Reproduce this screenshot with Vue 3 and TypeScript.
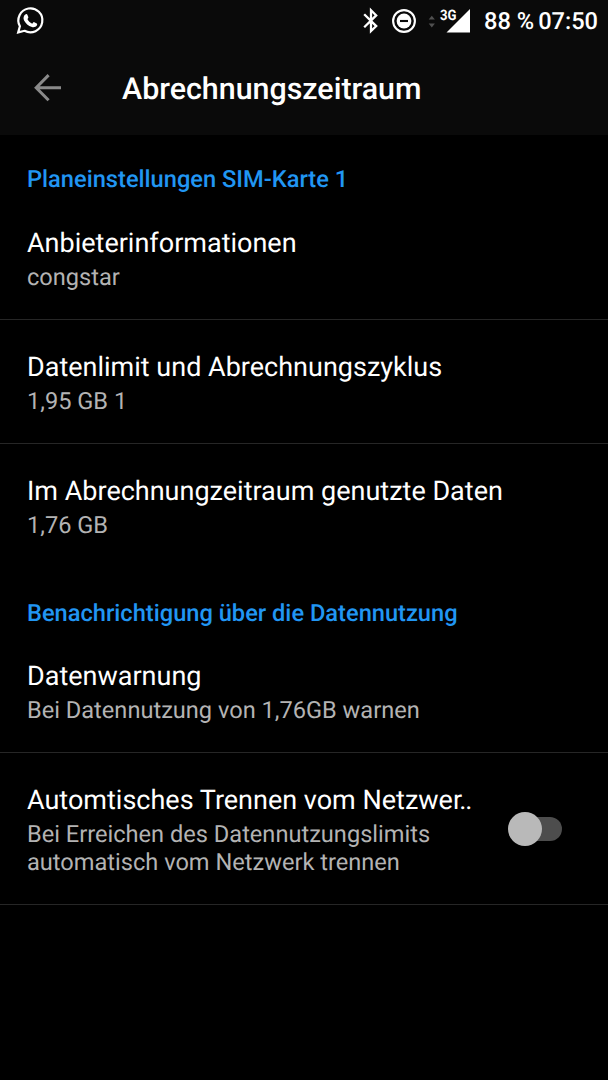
<script setup lang="ts">
import { ref } from 'vue'

interface Row {
  title: string
  cut?: string
  lines: string[]
  divider: boolean
  toggle?: boolean
}
interface Section {
  heading: string
  rows: Row[]
}

const enabled = ref(false)

const sections: Section[] = [
  {
    heading: 'Planeinstellungen SIM-Karte 1',
    rows: [
      { title: 'Anbieterinformationen', lines: ['congstar'], divider: true },
      { title: 'Datenlimit und Abrechnungszyklus', lines: ['1,95 GB 1'], divider: true },
      { title: 'Im Abrechnungzeitraum genutzte Daten', lines: ['1,76 GB'], divider: false },
    ],
  },
  {
    heading: 'Benachrichtigung über die Datennutzung',
    rows: [
      { title: 'Datenwarnung', lines: ['Bei Datennutzung von 1,76GB warnen'], divider: true },
      {
        title: 'Automtisches Trennen vom Netzwe',
        cut: 'r..',
        lines: ['Bei Erreichen des Datennutzungslimits', 'automatisch vom Netzwerk trennen'],
        divider: true,
        toggle: true,
      },
    ],
  },
]
</script>

<template>
  <div class="screen">
    <header class="header">
      <div class="status">
        <svg class="whatsapp" width="30" height="30" viewBox="0 0 30 30">
          <path d="M3.2 26.4 L4.9 20.2 A12 12 0 1 1 9.5 24.8 Z" fill="none" stroke="#fff" stroke-width="2.2" stroke-linejoin="miter" />
          <path d="M10.7 8.2 C11.4 7.8 12.1 8 12.4 8.7 L13.3 11 C13.5 11.6 13.3 12 12.4 13.1 C13.4 15.2 15 16.8 17.2 17.7 C18.3 16.4 18.7 15.9 19.3 16.2 L21.8 17.4 C22.4 17.8 22.2 18.8 21.8 19.6 C21 21.1 18.7 21.7 16.9 21.1 C13.2 20 10.6 17.3 9.1 14.4 C7.9 12.1 8.6 9.3 10.7 8.2 Z" fill="#fff" />
        </svg>
        <span class="gap"></span>
        <svg class="bluetooth" width="18" height="28" viewBox="0 0 18 28">
          <path d="M2.2 7.2 L14.2 19.1 L9 24 V3.2 L14.2 8.4 L2.2 20.3" fill="none" stroke="#fff" stroke-width="2.3" />
        </svg>
        <svg class="dnd" width="26" height="26" viewBox="0 0 26 26">
          <circle cx="13" cy="13" r="10.9" fill="none" stroke="#fff" stroke-width="2.1" />
          <circle cx="13" cy="13" r="7.4" fill="#fff" />
          <path d="M9 13 H17" stroke="#0a0a0a" stroke-width="2.1" />
        </svg>
        <svg class="signal" width="44" height="30" viewBox="0 0 44 30">
          <path d="M0.7 13.5 L3.8 9.7 L6.9 13.5 Z M0.7 17.5 H6.9 L3.8 21.5 Z" fill="#505050" />
          <path d="M18.5 26.5 L42 3 V26.5 Z" fill="#fff" />
          <text x="12" y="13.5" fill="#fff" stroke="#0a0a0a" stroke-width="2" paint-order="stroke" class="net" textLength="16.5" lengthAdjust="spacingAndGlyphs">3G</text>
        </svg>
        <span class="battery">88 %</span>
        <span class="clock">07:50</span>
      </div>
      <div class="toolbar">
        <svg class="back" width="30" height="30" viewBox="0 0 30 30">
          <path d="M15.6 2.1 L3.2 14.7 L15.6 27.3 M3.2 14.7 H28" fill="none" stroke="#8a8a8a" stroke-width="3" />
        </svg>
        <h1>Abrechnungszeitraum</h1>
      </div>
    </header>
    <section v-for="s in sections" :key="s.heading">
      <h2>{{ s.heading }}</h2>
      <div v-for="r in s.rows" :key="r.title" class="row" :class="{ divided: r.divider }">
        <div class="text">
          <div class="title">{{ r.title }}<span v-if="r.cut" class="cut">{{ r.cut }}</span></div>
          <div v-for="l in r.lines" :key="l" class="sub">{{ l }}</div>
        </div>
        <button v-if="r.toggle" class="switch" :class="{ on: enabled }" role="switch" :aria-checked="enabled" @click="enabled = !enabled">
          <span class="thumb"></span>
        </button>
      </div>
    </section>
  </div>
</template>

<style>
html,
body {
  margin: 0;
  background: #000;
}
</style>

<style scoped>
.screen {
  width: 608px;
  height: 1080px;
  overflow: hidden;
  background: #000;
  color: #fff;
  font-family: Roboto, sans-serif;
  text-rendering: geometricPrecision;
}
.header {
  height: 135px;
  background: #0a0a0a;
}
.status {
  display: flex;
  align-items: center;
  box-sizing: border-box;
  height: 41px;
  padding: 0 10px 0 15px;
  font-size: 23.6px;
  font-weight: 500;
  line-height: 28px;
  white-space: nowrap;
}
.status svg,
.back {
  flex: none;
}
.gap {
  flex: 1;
}
.bluetooth {
  margin-right: 11px;
}
.dnd {
  margin-right: 11px;
}
.signal {
  margin-right: 12px;
}
.net {
  font-size: 14.5px;
  font-weight: 700;
}
.battery {
  margin-right: 4px;
}
.toolbar {
  display: flex;
  align-items: center;
  height: 94px;
  padding-left: 33px;
}
h1 {
  margin: 4px 0 0 59px;
  font-size: 30.4px;
  font-weight: 500;
  line-height: 36px;
}
h2 {
  box-sizing: border-box;
  height: 61px;
  margin: 0;
  padding: 30px 27px 0;
  color: #2196f3;
  font-size: 23.65px;
  font-weight: 500;
  line-height: 28px;
}
section + section h2 {
  padding-top: 31px;
}
.row {
  display: flex;
  justify-content: space-between;
  align-items: center;
  padding: 31px 46px 28px 27px;
  border-bottom: 1px solid transparent;
}
.divided {
  border-bottom-color: #262626;
}
.title {
  margin-bottom: 4px;
  font-size: 27px;
  line-height: 32px;
  white-space: nowrap;
}
.cut {
  letter-spacing: -1.2px;
}
.sub {
  color: #b3b3b3;
  font-size: 23.6px;
  line-height: 28px;
  white-space: nowrap;
}
.switch {
  display: flex;
  align-items: center;
  flex: none;
  width: 50px;
  height: 24px;
  margin: -3px 0 0;
  padding: 0;
  border: 0;
  border-radius: 12px;
  background: #4d4d4d;
}
.thumb {
  flex: none;
  width: 34px;
  height: 34px;
  margin-left: -4px;
  border-radius: 50%;
  background: #b9b9b9;
}
.on .thumb {
  margin-left: 20px;
}
</style>
